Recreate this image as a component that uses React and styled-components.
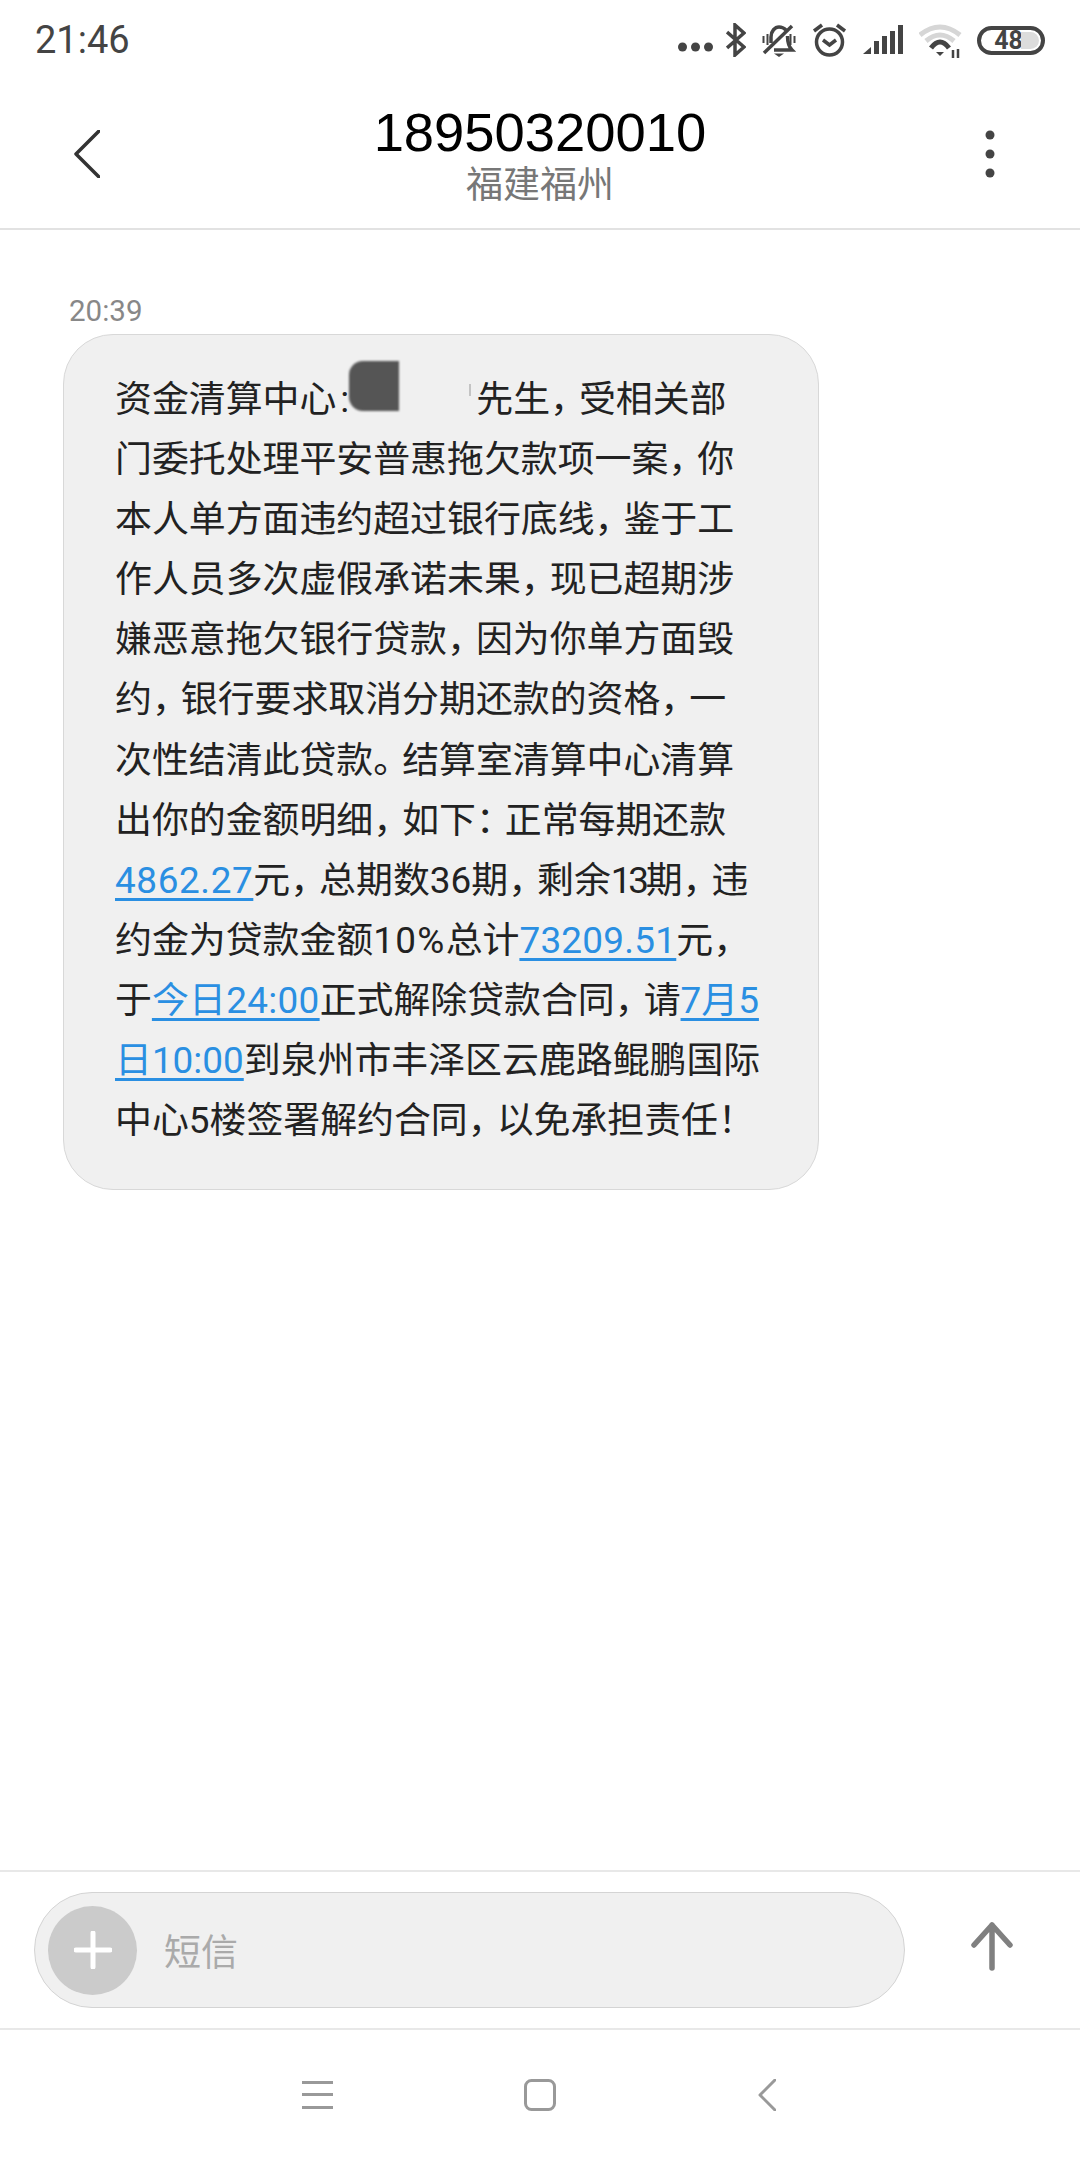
import React from 'react'
import styled, { createGlobalStyle } from 'styled-components'

const CJK = `"Noto Sans CJK SC", sans-serif`
const BODY = `Roboto, "Noto Sans CJK SC", sans-serif`

const GlobalStyle = createGlobalStyle`
  html, body {
    margin: 0;
    padding: 0;
    background: #fff;
  }
  * {
    box-sizing: border-box;
  }
`

const Screen = styled.div`
  width: 1080px;
  height: 2160px;
  display: flex;
  flex-direction: column;
  background: #fff;
  font-family: ${BODY};
  overflow: hidden;
`

const StatusBar = styled.div`
  height: 80px;
  padding: 0 35px 0 35px;
  display: flex;
  align-items: center;
  justify-content: space-between;
`

const Clock = styled.span`
  font-family: Roboto, sans-serif;
  font-size: 38px;
  color: #444;
`

const StatusIcons = styled.div`
  display: flex;
  align-items: center;
  gap: 16px;
`

const Glyph = styled.svg`
  display: block;
  flex: none;
`

const MoreDots = styled(Glyph)`
  margin: 16px -3px 0 0;
`

const WifiGlyph = styled(Glyph)`
  margin: 4px -1px 0 0;
`

const Battery = styled.div`
  position: relative;
  width: 68px;
  height: 29px;
  padding-right: 5px;
  border: 4px solid #444;
  border-radius: 15px;
  display: flex;
  align-items: center;
  justify-content: center;
  font-family: Roboto, sans-serif;
  font-weight: 700;
  font-size: 25px;
  color: #444;

  &::before {
    content: '';
    position: absolute;
    top: 2px;
    right: 2px;
    width: 18px;
    height: 17px;
    border-radius: 0 9px 9px 0;
    background: #dcdcdc;
  }
`

const Header = styled.header`
  height: 150px;
  display: grid;
  grid-template-columns: 1fr auto 1fr;
  align-items: center;
  padding: 0 85px;
  border-bottom: 2px solid #e2e2e2;
`

const BackGlyph = styled(Glyph)`
  margin-left: -11px;
`

const MenuGlyph = styled(Glyph)`
  justify-self: end;
`

const TitleBlock = styled.div`
  display: flex;
  flex-direction: column;
  align-items: center;
  padding-bottom: 4px;
`

const Title = styled.div`
  font-family: "Liberation Sans", sans-serif;
  font-size: 54.4px;
  line-height: 60px;
  color: #000;
`

const Subtitle = styled.div`
  font-family: ${CJK};
  font-size: 37px;
  line-height: 39px;
  color: #777;
`

const Messages = styled.main`
  flex: 1;
  padding: 63px 0 0 63px;
`

const Stamp = styled.div`
  font-family: Roboto, sans-serif;
  font-size: 29.5px;
  line-height: 36px;
  padding-left: 6px;
  margin-bottom: 5px;
  color: #888;
`

const Bubble = styled.div`
  width: 756px;
  height: 856px;
  padding: 35px 0 0 51px;
  background: #f0f0f0;
  border: 1px solid #d8d8d8;
  border-radius: 50px;
  color: #222;
  font-size: 36.9px;
`

const Line = styled.div`
  height: 60.1px;
  line-height: 60px;
  white-space: nowrap;
`

const Track = styled.span`
  letter-spacing: ${p => p.$t || 0}px;
`

const Phone = styled(Track)`
  color: #2a8fe2;
  text-decoration: underline;
  text-decoration-thickness: 3px;
  text-underline-offset: 5px;
`

const Tight = styled.span`
  letter-spacing: -8px;
`

const Colon = styled.span`
  margin-left: 4px;
`

const Redaction = styled.span`
  position: relative;
  display: inline-block;
  width: 127px;
  height: 0;

  &::before {
    content: '';
    position: absolute;
    left: 0;
    bottom: 1px;
    width: 50px;
    height: 50px;
    background: #555;
    border-radius: 14px 0 0 14px;
    filter: blur(0.8px);
  }

  &::after {
    content: '';
    position: absolute;
    left: 120px;
    bottom: 16px;
    width: 2px;
    height: 12px;
    background: #c4c4c4;
  }
`

const Composer = styled.div`
  height: 160px;
  padding: 20px 0 0 34px;
  display: flex;
  align-items: flex-start;
  border-top: 2px solid #e8e8e8;
  border-bottom: 2px solid #e8e8e8;
`

const InputPill = styled.div`
  width: 871px;
  height: 116px;
  padding-left: 13px;
  display: flex;
  align-items: center;
  gap: 27px;
  background: #f0f0f0;
  border: 1px solid #d4d4d4;
  border-radius: 58px;
`

const AddButton = styled.div`
  width: 89px;
  height: 89px;
  flex: none;
  border-radius: 50%;
  background: #cbcbcb;
  display: flex;
  align-items: center;
  justify-content: center;
`

const Placeholder = styled.span`
  font-family: ${CJK};
  font-size: 37px;
  color: #aaa;
`

const SendButton = styled.div`
  margin: 30px 0 0 66px;
`

const NavBar = styled.nav`
  flex: none;
  height: 130px;
  padding-left: 302px;
  display: flex;
  align-items: center;
`

const NavSlot = styled.div`
  width: ${p => p.$w}px;
  flex: none;
`

// full stop, comma and colon take less room than a full cell in the reference
const tight = text =>
  text.split(/([，。：])/).map((part, i) =>
    i % 2 ? <Tight key={i}>{part}</Tight> : part
  )

export default function App() {
  return (
    <Screen>
      <GlobalStyle />
      <StatusBar>
        <Clock>21:46</Clock>
        <StatusIcons>
          <MoreDots width="35" height="34" viewBox="0 0 35 34" fill="#444">
            <circle cx="4.5" cy="16" r="4.5" />
            <circle cx="17.5" cy="16" r="4.5" />
            <circle cx="30.5" cy="16" r="4.5" />
          </MoreDots>
          <Glyph width="20" height="34" viewBox="0 0 20 34" fill="none" stroke="#444" strokeWidth="3.5">
            <path d="M1 9 L18 24 L9 32 V2 L18 10 L1 25" />
          </Glyph>
          <Glyph width="34" height="34" viewBox="0 0 34 34" fill="none" stroke="#444" strokeWidth="3.5">
            <path d="M9 20 V14 C9 8 13 4 17 4 C20 4 22 5 24 7" />
            <path d="M12 27 H30 C27 24 25.5 21 25.5 13" />
            <path d="M2 30 L30 3" />
            <path d="M12 30.5 H22 L17 34 Z" fill="#444" stroke="none" />
            <path d="M1.5 13 V20 M5.5 11 V22 M28.5 11 V22 M32.5 13 V20" strokeWidth="2" />
          </Glyph>
          <Glyph width="35" height="34" viewBox="0 0 35 34" fill="none" stroke="#444" strokeWidth="3.5">
            <circle cx="17.5" cy="19" r="13" />
            <path d="M11 17 L17.5 22 L24 17" />
            <path d="M2 8 L10 2 M33 8 L25 2" />
          </Glyph>
          <Glyph width="40" height="30" viewBox="0 0 40 30" fill="#444">
            <path d="M0 29 L8 22 V29 Z" />
            <rect x="11" y="16" width="5" height="13" />
            <rect x="19" y="11" width="5" height="18" />
            <rect x="27" y="6" width="5" height="23" />
            <rect x="35" y="0" width="5" height="29" />
          </Glyph>
          <WifiGlyph width="43" height="36" viewBox="0 0 43 36" fill="none" strokeWidth="5">
            <path d="M1 11 Q21 -5 41 11" stroke="#d6d6d6" />
            <path d="M7 17 Q21 5 35 17" stroke="#d6d6d6" />
            <path d="M12 24 Q21 12 30 24" stroke="#444" />
            <path d="M17 28 H25 L21 32 Z" fill="#444" stroke="none" />
            <path d="M34 26 V34 M39 25 V34" stroke="#444" strokeWidth="2.5" />
          </WifiGlyph>
          <Battery>48</Battery>
        </StatusIcons>
      </StatusBar>

      <Header>
        <BackGlyph width="26" height="48" viewBox="0 0 26 48" fill="none" stroke="#333" strokeWidth="3.5" strokeLinecap="round" strokeLinejoin="round">
          <path d="M25 1 L2 24 L25 47" />
        </BackGlyph>
        <TitleBlock>
          <Title>18950320010</Title>
          <Subtitle>福建福州</Subtitle>
        </TitleBlock>
        <MenuGlyph width="10" height="48" viewBox="0 0 10 48" fill="#444">
          <circle cx="5" cy="5" r="4.5" />
          <circle cx="5" cy="24" r="4.5" />
          <circle cx="5" cy="43" r="4.5" />
        </MenuGlyph>
      </Header>

      <Messages>
        <Stamp>20:39</Stamp>
        <Bubble>
          <Line>资金清算中心<Colon>:</Colon><Redaction />{tight('先生，受相关部')}</Line>
          <Line>{tight('门委托处理平安普惠拖欠款项一案，你')}</Line>
          <Line>{tight('本人单方面违约超过银行底线，鉴于工')}</Line>
          <Line>{tight('作人员多次虚假承诺未果，现已超期涉')}</Line>
          <Line>{tight('嫌恶意拖欠银行贷款，因为你单方面毁')}</Line>
          <Line>{tight('约，银行要求取消分期还款的资格，一')}</Line>
          <Line>{tight('次性结清此贷款。结算室清算中心清算')}</Line>
          <Line>{tight('出你的金额明细，如下：正常每期还款')}</Line>
          <Line><Phone $t={0.6}>4862.27</Phone>{tight('元，总期数36期，剩余')}<Track $t={-3.3}>13</Track>{tight('期，违')}</Line>
          <Line>约金为贷款金额<Track $t={1.3}>10%</Track>总计<Phone $t={0.25}>73209.51</Phone>{tight('元，')}</Line>
          <Line>于<Phone $t={0.3}>今日24:00</Phone>{tight('正式解除贷款合同，请')}<Phone>7月5</Phone></Line>
          <Line><Phone>日10:00</Phone>到泉州市丰泽区云鹿路鲲鹏国际</Line>
          <Line>{tight('中心5楼签署解约合同，以免承担责任！')}</Line>
        </Bubble>
      </Messages>

      <Composer>
        <InputPill>
          <AddButton>
            <Glyph width="38" height="38" viewBox="0 0 38 38" stroke="#fff" strokeWidth="5" strokeLinecap="round">
              <path d="M19 2 V36 M2 19 H36" />
            </Glyph>
          </AddButton>
          <Placeholder>短信</Placeholder>
        </InputPill>
        <SendButton>
          <Glyph width="42" height="50" viewBox="0 0 42 50" fill="none" stroke="#808080" strokeWidth="5.5" strokeLinecap="round" strokeLinejoin="round">
            <path d="M21 46 V3 M3 23 L21 3 L39 23" />
          </Glyph>
        </SendButton>
      </Composer>

      <NavBar>
        <NavSlot $w={222}>
          <Glyph width="31" height="28" viewBox="0 0 31 28" fill="#999">
            <rect y="0" width="31" height="3" />
            <rect y="12" width="31" height="3" />
            <rect y="25" width="31" height="3" />
          </Glyph>
        </NavSlot>
        <NavSlot $w={234}>
          <Glyph width="32" height="32" viewBox="0 0 32 32" fill="none" stroke="#999" strokeWidth="3">
            <rect x="1.5" y="1.5" width="29" height="29" rx="6" />
          </Glyph>
        </NavSlot>
        <NavSlot $w={18}>
          <Glyph width="18" height="32" viewBox="0 0 18 32" fill="none" stroke="#999" strokeWidth="3" strokeLinecap="round" strokeLinejoin="round">
            <path d="M17 1 L2 16 L17 31" />
          </Glyph>
        </NavSlot>
      </NavBar>
    </Screen>
  )
}
